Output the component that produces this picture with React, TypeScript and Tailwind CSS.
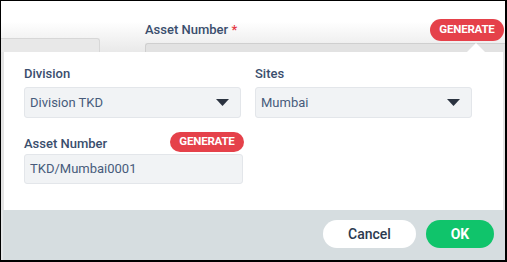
import React from "react";

function Caret() {
  return (
    <svg width="13" height="7" viewBox="0 0 13 7" className="shrink-0">
      <path d="M0 0 L13 0 L6.5 7 Z" fill="#2b3340" />
    </svg>
  );
}

function Select({ value }: { value: string }) {
  return (
    <div className="flex h-[31px] w-[217px] items-center justify-between rounded-[3px] border border-[#e3e6ea] bg-[#f1f3f5] pl-[5px] pr-[11px]">
      <span className="text-[13px] text-[#475b7b]">{value}</span>
      <Caret />
    </div>
  );
}

function Generate({ h }: { h: string }) {
  return (
    <div
      className={`flex ${h} w-[74px] items-center justify-center rounded-full bg-[#e5414a] text-[11.5px] font-bold tracking-[-0.2px] text-white`}
    >
      GENERATE
    </div>
  );
}

export default function App() {
  return (
    <div
      className="flex h-[262px] w-[507px] flex-col overflow-hidden border-b-2 border-l border-r-2 border-t border-black bg-white"
      style={{ fontFamily: "Roboto, 'Liberation Sans', sans-serif" }}
    >
      {/* background form (behind popover) */}
      <div className="flex h-[51px] shrink-0 items-end bg-gradient-to-b from-white from-40% to-[#e9e9e9]">
        <div className="h-[14px] w-[99px] shrink-0 rounded-tr-[3px] border-r border-t border-[#d7d7d7] bg-[#e8e8e8]" />
        <div className="ml-[45px] flex flex-1 flex-col">
          <div className="flex items-end justify-between pr-[1px]">
            <div className="pb-[2px] text-[13px] font-medium text-[#3a4e6d]">
              Asset Number <span className="text-[#e53945]">*</span>
            </div>
            <Generate h="h-[22px]" />
          </div>
          <div className="mt-[2px] h-[9px] rounded-tl-[3px] border-l border-t border-[#cfcfcf] bg-[#e2e2e2]" />
        </div>
      </div>

      {/* popover */}
      <div className="relative flex h-[158px] shrink-0 bg-[#e4e4e4] pl-[3px] pr-[2px]">
        <div className="absolute right-[20px] top-[-9px] h-0 w-0 border-b-[9px] border-l-[9px] border-r-[9px] border-b-white border-l-transparent border-r-transparent" />
        <div className="flex-1 bg-white pl-[20px] pt-[14px]">
          <div className="flex gap-[14px]">
            <div className="flex flex-col gap-[5px]">
              <div className="text-[13px] leading-[16px] font-medium text-[#3a4e6d]">Division</div>
              <Select value="Division TKD" />
            </div>
            <div className="flex flex-col gap-[5px]">
              <div className="text-[13px] leading-[16px] font-medium text-[#3a4e6d]">Sites</div>
              <Select value="Mumbai" />
            </div>
          </div>
          <div className="mt-[14px] flex w-[220px] items-end justify-between">
            <div className="text-[13px] leading-[16px] font-medium text-[#3a4e6d]">Asset Number</div>
            <Generate h="h-[20px]" />
          </div>
          <div className="mt-[2px] flex h-[30px] w-[219px] items-center rounded-[3px] border border-[#e3e6ea] bg-[#f1f3f5] pl-[5px]">
            <span className="text-[13px] text-[#475b7b]">TKD/Mumbai0001</span>
          </div>
        </div>
      </div>

      {/* footer */}
      <div className="flex flex-1 items-start justify-end gap-[10px] border-l-2 border-[#e3e6e8] bg-[#d6dde0] pr-[11px] pt-[10px]">
        <button className="h-[28px] w-[93px] rounded-full bg-white text-[14px] font-medium text-[#2c3a4f]">
          Cancel
        </button>
        <button className="h-[28px] w-[68px] rounded-full bg-[#10c46b] text-[14px] font-bold text-white">
          OK
        </button>
      </div>
    </div>
  );
}
